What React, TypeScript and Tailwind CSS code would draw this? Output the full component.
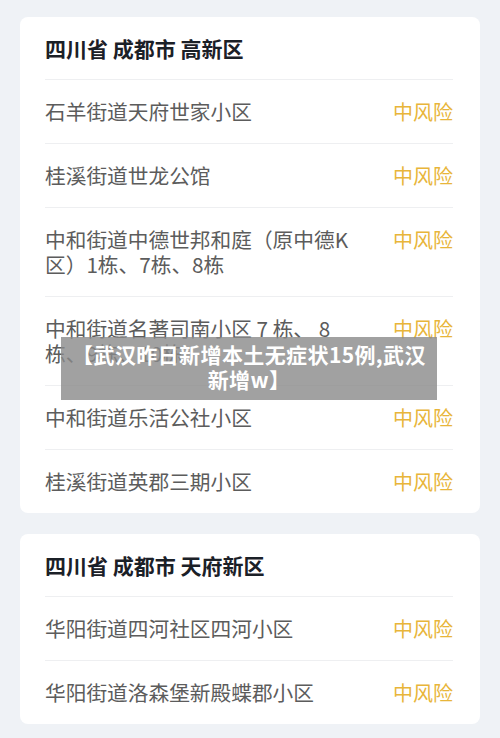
import React from 'react';

type Area = { title: string; items: string[] };

const areas: Area[] = [
  {
    title: '四川省 成都市 高新区',
    items: [
      '石羊街道天府世家小区',
      '桂溪街道世龙公馆',
      '中和街道中德世邦和庭（原中德K区）1栋、7栋、8栋',
      '中和街道名著司南小区 7 栋、 8 栋、9栋、10栋',
      '中和街道乐活公社小区',
      '桂溪街道英郡三期小区',
    ],
  },
  {
    title: '四川省 成都市 天府新区',
    items: ['华阳街道四河社区四河小区', '华阳街道洛森堡新殿蝶郡小区'],
  },
];

const font = { fontFamily: '"Noto Sans CJK SC", "Noto Sans", sans-serif' };

function AreaCard({ area }: { area: Area }) {
  return (
    <div className="bg-white rounded-[8px] pl-[25px] pr-[27px]">
      <div className="py-[19px] leading-[24px] text-[21px] font-bold text-[#1b2027] border-b border-[#eeeff1]">
        {area.title}
      </div>
      {area.items.map((item, i) => (
        <div
          key={item}
          className={
            'flex items-start justify-between py-[19px] ' +
            (i < area.items.length - 1 ? 'border-b border-[#eeeff1]' : '')
          }
        >
          <span className="max-w-[308px] text-[20.7px] leading-[25px] text-[#5c5c5c]">{item}</span>
          <span className="shrink-0 w-[60px] text-[20px] leading-[25px] text-[#e8b53a]">中风险</span>
        </div>
      ))}
    </div>
  );
}

export default function App() {
  return (
    <div className="relative w-[500px] h-[738px] overflow-hidden bg-[#eff2f6]" style={font}>
      <div className="flex flex-col gap-[21px] px-5 pt-[17px]">
        {areas.map((a) => (
          <AreaCard key={a.title} area={a} />
        ))}
      </div>

      {/* caption banner */}
      <div className="absolute left-[61px] top-[337px] w-[376px] h-[63px] bg-[#8a8a8a]/80 pt-[5px] text-center text-white font-bold text-[21px] tracking-[0.4px] leading-[25px]">
        【武汉昨日新增本土无症状15例,武汉
        <br />
        新增w】
      </div>
    </div>
  );
}
